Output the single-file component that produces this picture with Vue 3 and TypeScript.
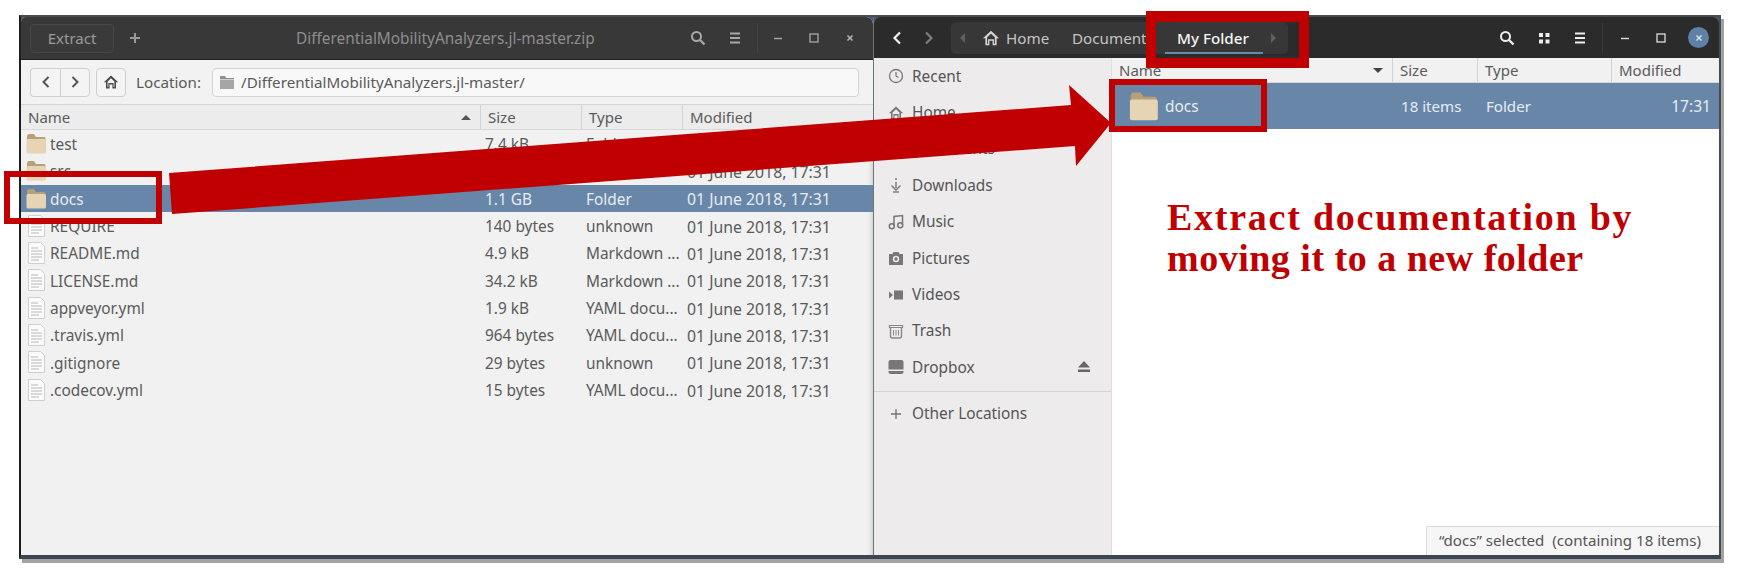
<template>
  <div class="desktop">
    <div class="frame">
      <!-- archive manager -->
      <section class="pane-left">
        <header class="title-left">
          <button class="extract-btn">Extract</button>
          <svg class="ico plus-ico" viewBox="0 0 16 16"><path d="M8 3v10M3 8h10" stroke="#9a9a9a" stroke-width="2" /></svg>
          <span class="title-text">DifferentialMobilityAnalyzers.jl-master.zip</span>
          <svg class="ico search-l" viewBox="0 0 16 16"><circle cx="6.5" cy="6.5" r="4.5" fill="none" stroke="#a8a8a8" stroke-width="2" /><path d="M10 10l4.5 4.5" stroke="#a8a8a8" stroke-width="2.4" /></svg>
          <svg class="ico menu-l" viewBox="0 0 16 16"><path d="M3 3.5h10M3 8h10M3 12.5h10" stroke="#a8a8a8" stroke-width="2" /></svg>
          <span class="divider divider-l" />
          <svg class="ico min-l" viewBox="0 0 16 16"><path d="M4 8.5h8" stroke="#a8a8a8" stroke-width="1.4" /></svg>
          <svg class="ico max-l" viewBox="0 0 16 16"><rect x="4" y="4" width="8" height="8" fill="none" stroke="#a8a8a8" stroke-width="1.3" /></svg>
          <svg class="ico close-l" viewBox="0 0 16 16"><path d="M5.5 5.5l5 5M10.5 5.5l-5 5" stroke="#b4b4b4" stroke-width="1.6" /></svg>
        </header>

        <div class="toolbar">
          <div class="btn-group">
            <span class="tool-btn nav-btn">
              <svg class="ico" viewBox="0 0 16 16"><path d="M10.5 3L5.5 8l5 5" fill="none" stroke="#555" stroke-width="2" /></svg>
            </span>
            <span class="tool-btn nav-btn">
              <svg class="ico" viewBox="0 0 16 16"><path d="M5.5 3l5 5-5 5" fill="none" stroke="#555" stroke-width="2" /></svg>
            </span>
          </div>
          <span class="tool-btn home-btn">
            <svg class="ico" viewBox="0 0 16 16"><path d="M8 1.5L.8 8.2h2.2V14.5h3.6v-4h2.800v4H13V8.2h2.200z" fill="#4a4a4a" /><path d="M4.6 7.4L8 4.2l3.4 3.2V13h-.8V9H5.4v4h-.8z" fill="#f1f1f1" /></svg>
          </span>
          <span class="loc-label">Location:</span>
          <div class="loc-entry">
            <svg class="loc-ico" viewBox="0 0 16 16"><path d="M1 2h5l1.5 2H15v1H1z" fill="#8f8f8f" /><path d="M1 5.500h14V15H1z" fill="#a6a6a6" /></svg>
            <span>/DifferentialMobilityAnalyzers.jl-master/</span>
          </div>
        </div>

        <div class="list-head cols-left">
          <span class="head-cell first">Name<i class="sort-up" /></span>
          <span class="head-cell">Size</span>
          <span class="head-cell">Type</span>
          <span class="head-cell">Modified</span>
        </div>

        <div
          v-for="row in archiveRows"
          :key="row.name"
          class="file-row cols-left"
          :class="{ selected: row.name === 'docs' }"
        >
          <span class="name-cell">
            <svg v-if="row.folder" class="folder-ico" viewBox="0 0 20 21">
              <path d="M1 3.500Q1 1 3 1h5l2 3h8q1.500 0 1.500 1.500V9H1z" fill="#b79f78" />
              <path d="M0.500 7.500Q.5 6 2 6h16.500Q20 6 20 7.500V19q0 1.500-1.500 1.500H2Q.5 20.500.5 19z" fill="#e6d4b4" />
            </svg>
            <svg v-else class="file-ico" viewBox="0 0 17 22">
              <path d="M.5.5h12l4 4v17H.5z" fill="#fbfbfb" stroke="#cfcfcf" />
              <path d="M3 6h7M3 9h11M3 12h11M3 15h11M3 18h8" stroke="#b8b8b8" stroke-width="1" />
            </svg>
            <span>{{ row.name }}</span>
          </span>
          <span class="cell">{{ row.size }}</span>
          <span class="cell">{{ row.type }}</span>
          <span class="cell date">01 June 2018, 17:31</span>
        </div>
      </section>

      <!-- nautilus -->
      <section class="pane-right">
        <header class="title-right">
          <svg class="ico back-r" viewBox="0 0 16 16"><path d="M11 2.500L5.500 8l5.500 5.500" fill="none" stroke="#f2f2f2" stroke-width="2.200" /></svg>
          <svg class="ico fwd-r" viewBox="0 0 16 16"><path d="M5 2.500L10.500 8 5 13.500" fill="none" stroke="#7c7c7c" stroke-width="2.200" /></svg>
          <nav class="path-bar">
            <i class="arrow-left" />
            <svg class="home-r" viewBox="0 0 16 16"><path d="M8 1.500L.8 8.200h2.200V14.500h3.600v-4h2.800v4H13V8.200h2.200z" fill="#d4d4d4" /><path d="M4.600 7.400L8 4.200l3.400 3.200V13h-.8V9H5.400v4h-.8z" fill="#373737" /></svg>
            <span class="crumb crumb-home">Home</span>
            <span class="crumb crumb-docs">Documents</span>
            <span class="crumb-current">My Folder</span>
            <i class="arrow-right" />
            <i class="crumb-line" />
          </nav>
          <svg class="ico search-r" viewBox="0 0 16 16"><circle cx="6.500" cy="6.500" r="4.500" fill="none" stroke="#eee" stroke-width="2" /><path d="M10 10l4.500 4.500" stroke="#eee" stroke-width="2.400" /></svg>
          <svg class="ico grid-r" viewBox="0 0 16 16"><path d="M3 3h4v4H3zM9.500 3h4v4h-4zM3 9.500h4v4H3zM9.500 9.500h4v4h-4z" fill="#eee" /></svg>
          <svg class="ico menu-r" viewBox="0 0 16 16"><path d="M3 3.500h10M3 8h10M3 12.500h10" stroke="#eee" stroke-width="2" /></svg>
          <span class="divider divider-r" />
          <svg class="ico min-r" viewBox="0 0 16 16"><path d="M4 8.500h8" stroke="#ddd" stroke-width="1.400" /></svg>
          <svg class="ico max-r" viewBox="0 0 16 16"><rect x="4" y="4" width="8" height="8" fill="none" stroke="#ddd" stroke-width="1.300" /></svg>
          <span class="close-r">
            <svg class="ico" viewBox="0 0 16 16"><path d="M5.500 5.500l5 5M10.500 5.500l-5 5" stroke="#dfe7f0" stroke-width="1.400" /></svg>
          </span>
        </header>

        <div class="right-body">
          <aside class="sidebar">
            <div v-for="place in places" :key="place.label" class="place">
              <svg class="place-ico" viewBox="0 0 16 16" v-html="place.icon" />
              <span>{{ place.label }}</span>
              <svg v-if="place.label === 'Dropbox'" class="eject" viewBox="0 0 14 12"><path d="M7 0l6 6.500H1zM1 8.500h12V11H1z" fill="#666" /></svg>
            </div>
            <div class="side-sep" />
            <div class="place other">
              <svg class="place-ico" viewBox="0 0 16 16"><path d="M8 3v10M3 8h10" stroke="#777" stroke-width="1.400" /></svg>
              <span>Other Locations</span>
            </div>
          </aside>

          <main class="files">
            <div class="list-head cols-right">
              <span class="head-cell first">Name<i class="sort-down" /></span>
              <span class="head-cell">Size</span>
              <span class="head-cell">Type</span>
              <span class="head-cell">Modified</span>
            </div>
            <div class="big-row cols-right">
              <span class="big-name">
                <svg class="folder-big" viewBox="0 0 20 21">
                  <path d="M1 3.500Q1 1 3 1h5l2 3h8q1.500 0 1.500 1.500V9H1z" fill="#b79f78" />
                  <path d="M0.500 7.500Q.5 6 2 6h16.500Q20 6 20 7.500V19q0 1.500-1.500 1.500H2Q.5 20.500.5 19z" fill="#e6d4b4" />
                </svg>
                docs
              </span>
              <span class="cell">18 items</span>
              <span class="cell">Folder</span>
              <span class="cell time">17:31</span>
            </div>
            <div class="status">“docs” selected&nbsp; (containing 18 items)</div>
          </main>
        </div>
      </section>
    </div>

    <!-- annotations drawn over the screenshot -->
    <svg class="arrow" viewBox="0 0 1738 568">
      <polygon points="169,173 1071,105 1069,85 1111,123 1076,166 1075,146 172,214" fill="#c00000" />
    </svg>
    <div class="mark mark-docs" />
    <div class="mark mark-target" />
    <div class="mark mark-crumb" />
    <p class="note">
      <span class="note-first">Extract documentation by</span>
      <span class="note-second">moving it to a new folder</span>
    </p>
  </div>
</template>

<script setup lang="ts">
interface ArchiveRow {
  name: string
  size: string
  type: string
  folder?: boolean
}

const archiveRows: ArchiveRow[] = [
  { name: 'test', size: '7.4 kB', type: 'Folder', folder: true },
  { name: 'src', size: '52.8 kB', type: 'Folder', folder: true },
  { name: 'docs', size: '1.1 GB', type: 'Folder', folder: true },
  { name: 'REQUIRE', size: '140 bytes', type: 'unknown' },
  { name: 'README.md', size: '4.9 kB', type: 'Markdown ...' },
  { name: 'LICENSE.md', size: '34.2 kB', type: 'Markdown ...' },
  { name: 'appveyor.yml', size: '1.9 kB', type: 'YAML docu...' },
  { name: '.travis.yml', size: '964 bytes', type: 'YAML docu...' },
  { name: '.gitignore', size: '29 bytes', type: 'unknown' },
  { name: '.codecov.yml', size: '15 bytes', type: 'YAML docu...' },
]

const places = [
  { label: 'Recent', icon: '<circle cx="8" cy="8" r="6.500" fill="none" stroke="#777" stroke-width="1.300"/><path d="M8 4v4l2.500 1.500" fill="none" stroke="#777" stroke-width="1.200"/>' },
  { label: 'Home', icon: '<path d="M8 1.500L.8 8.200h2.200V14.500h3.600v-4h2.800v4H13V8.200h2.200z" fill="#777"/><path d="M4.600 7.400L8 4.200l3.400 3.200V13h-.8V9H5.400v4h-.8z" fill="#edebec"/>' },
  { label: 'Documents', icon: '<path d="M3 1h10v14H3z" fill="none" stroke="#777" stroke-width="1.300"/><path d="M5 5h6M5 8h6M5 11h6" stroke="#777"/>' },
  { label: 'Downloads', icon: '<path d="M8 1v2M8 5v6" stroke="#777" stroke-width="1.400"/><path d="M3.500 8.500L8 13l4.500-4.500" fill="none" stroke="#777" stroke-width="1.400"/><path d="M5 15h6" stroke="#777" stroke-width="1.400"/>' },
  { label: 'Music', icon: '<circle cx="3.800" cy="12.200" r="2.500" fill="none" stroke="#777" stroke-width="1.500"/><circle cx="12.200" cy="11.200" r="2.500" fill="none" stroke="#777" stroke-width="1.500"/><path d="M6 12V2.500l8.500-1V11" fill="none" stroke="#777" stroke-width="1.500"/>' },
  { label: 'Pictures', icon: '<path d="M1 4h3.500l1-2h5l1 2H15v11H1z" fill="#777"/><circle cx="8" cy="9" r="3.200" fill="#edebec"/><circle cx="8" cy="9" r="1.700" fill="#777"/>' },
  { label: 'Videos', icon: '<path d="M1 4.500l4 3.500-4 3.500z" fill="#777"/><path d="M6 3.500h9v9H6z" fill="#777"/>' },
  { label: 'Trash', icon: '<path d="M1.500 2.500h13v2h-13z" fill="none" stroke="#888" stroke-width="1.200"/><path d="M2.500 5v8q0 2 2 2h7q2 0 2-2V5" fill="none" stroke="#888" stroke-width="1.400"/><path d="M5.500 7v5.500M8 7v5.500M10.500 7v5.500" stroke="#888"/>' },
  { label: 'Dropbox', icon: '<path d="M2.500 1h11q2 0 2 2v7.500H.5V3q0-2 2-2z" fill="#777"/><path d="M.5 12h15v1q0 2-2 2h-11q-2 0-2-2z" fill="#777"/>' },
]
</script>

<style>
html,
body {
  margin: 0;
  background: #fff;
  overflow: hidden;
}
</style>

<style scoped>
.desktop {
  position: relative;
  width: 1738px;
  height: 568px;
  padding: 15px 0 0 19px;
  box-sizing: border-box;
  font-family: "Noto Sans", "DejaVu Sans", sans-serif;
  font-size: 15.400px;
  color: #5a5a5a;
}
.frame {
  display: flex;
  width: 1698px;
  height: 538px;
  border-style: solid;
  border-color: #474c54 #474c54 #3c4552 #1e1e1e;
  border-width: 2px 2px 4px 2px;
  box-shadow: 3px 4px 0 #a3a3a3;
  background: #46566c;
}
.ico {
  width: 16px;
  height: 16px;
  flex-shrink: 0;
}
.divider {
  width: 1px;
  height: 30px;
  background: #444;
}

/* left window */
.pane-left {
  width: 852px;
  flex-shrink: 0;
  height: 100%;
  background: #f1f1f1;
  box-shadow: inset -6px 0 5px -5px #c8c8c8;
  border-radius: 5px 7px 0 0;
}
.title-left {
  display: flex;
  align-items: center;
  height: 43px;
  background: #383838;
  border-bottom: 1px solid #1f1f1f;
  box-sizing: border-box;
  border-radius: 5px 7px 0 0;
  padding-left: 9px;
}
.extract-btn {
  width: 84px;
  height: 29px;
  background: #3a3a3a;
  border: 1px solid #474747;
  border-radius: 4px;
  color: #9b9b9b;
  font: inherit;
  font-size: 15px;
}
.plus-ico { margin-left: 13px; }
.title-text {
  margin-left: 153px;
  width: 298px;
  white-space: nowrap;
  color: #8e8e8e;
}
.search-l { margin-left: 96px; }
.menu-l { margin-left: 21px; }
.divider-l { margin-left: 14px; }
.min-l { margin-left: 12px; }
.max-l { margin-left: 20px; }
.close-l { margin-left: 20px; }

.toolbar {
  display: flex;
  align-items: center;
  height: 45px;
  box-sizing: border-box;
  padding-left: 9px;
  background: #f2f2f2;
  border-bottom: 1px solid #d6d6d6;
}
.btn-group { display: flex; }
.tool-btn {
  display: flex;
  align-items: center;
  justify-content: center;
  height: 29px;
  box-sizing: border-box;
  background: #f4f4f4;
  border: 1px solid #cfcfcf;
  border-radius: 4px;
}
.nav-btn { width: 30px; }
.nav-btn:first-child { border-radius: 4px 0 0 4px; border-right: none; }
.nav-btn:last-child { border-radius: 0 4px 4px 0; }
.home-btn { width: 30px; margin-left: 6px; }
.loc-label { margin-left: 10px; width: 76px; font-size: 15.200px; white-space: nowrap; }
.loc-entry {
  display: flex;
  align-items: center;
  width: 647px;
  height: 29px;
  box-sizing: border-box;
  padding-left: 6px;
  gap: 6px;
  background: #f8f8f8;
  border: 1px solid #d4d4d4;
  border-radius: 4px;
  font-size: 15.200px;
}
.loc-ico { width: 16px; height: 16px; }

.list-head {
  display: grid;
  height: 25px;
  background: #ececec;
  border-bottom: 1px solid #d8d8d8;
  box-sizing: border-box;
  font-size: 15px;
}
.cols-left { grid-template-columns: 459px 101px 101px 191px; }
.cols-right { grid-template-columns: 280px 85px 134px 108px; }
.head-cell {
  display: flex;
  align-items: center;
  padding-left: 7px;
  border-left: 1px solid #d2d2d2;
  position: relative;
}
.head-cell.first { border-left: none; }
.sort-up,
.sort-down {
  position: absolute;
  right: 9px;
  top: 10px;
  width: 0;
  height: 0;
  border-left: 5px solid transparent;
  border-right: 5px solid transparent;
}
.sort-up { border-bottom: 5px solid #555; }
.sort-down { border-top: 5px solid #444; right: 9px; }

.file-row {
  display: grid;
  height: 27.330px;
  align-items: center;
}
.file-row.selected,
.big-row {
  background: #6887a8;
  color: #e6ecf3;
}
.name-cell {
  display: flex;
  align-items: center;
  gap: 4px;
  padding-left: 5px;
}
.name-cell > span,
.file-row .cell { padding-top: 2px; }
.folder-ico { width: 20px; height: 21px; }
.file-ico { width: 17px; height: 22px; margin: 0 1px 0 2px; }
.cell { padding-left: 5px; white-space: nowrap; }
.date { font-size: 15.800px; }

/* right window */
.pane-right {
  flex: 1;
  min-width: 0;
  height: 100%;
  display: flex;
  flex-direction: column;
  border-left: 1px solid #6e747c;
  box-sizing: border-box;
}
.title-right {
  display: flex;
  align-items: center;
  height: 41px;
  flex-shrink: 0;
  background: #2b2b2b;
  box-sizing: border-box;
  padding-left: 15px;
  border-radius: 7px 7px 0 0;
}
.back-r { margin-left: 0; }
.fwd-r { margin-left: 16px; }
.path-bar {
  display: flex;
  align-items: center;
  width: 337px;
  height: 32px;
  margin-left: 14px;
  background: #373737;
  border-radius: 5px;
  position: relative;
  color: #c4c4c4;
  font-size: 15.200px;
}
.arrow-left,
.arrow-right {
  width: 0;
  height: 0;
  border-top: 5px solid transparent;
  border-bottom: 5px solid transparent;
}
.arrow-left {
  margin-left: 9px;
  border-right: 5px solid #5f5f5f;
}
.home-r { width: 18px; height: 18px; margin-left: 17px; flex-shrink: 0; }
.crumb-home { margin-left: 6px; width: 66px; }
.crumb-docs { width: 71px; white-space: nowrap; }
.crumb-current {
  margin-left: 34px;
  width: 71px;
  color: #f4f4f4;
  font-weight: 500;
  white-space: nowrap;
}
.arrow-right {
  margin-left: 23px;
  border-left: 5px solid #5f5f5f;
}
.crumb-line {
  position: absolute;
  left: 214px;
  bottom: 0;
  width: 98px;
  height: 2px;
  background: #6a89a8;
}
.search-r { margin-left: 211px; }
.grid-r { margin-left: 21px; }
.menu-r { margin-left: 20px; }
.divider-r { margin-left: 14px; background: #3a3a3a; }
.min-r { margin-left: 14px; }
.max-r { margin-left: 20px; }
.close-r {
  display: flex;
  align-items: center;
  justify-content: center;
  width: 21px;
  height: 21px;
  margin-left: 19px;
  border-radius: 50%;
  background: #5e81a8;
}

.right-body {
  flex: 1;
  display: flex;
  min-height: 0;
}
.sidebar {
  width: 238px;
  flex-shrink: 0;
  background: #edebec;
  border-right: 1px solid #e0e0e0;
  box-sizing: border-box;
}
.place {
  display: flex;
  align-items: center;
  height: 36.400px;
  padding-left: 14px;
  gap: 8px;
  position: relative;
  color: #555;
}
.place-ico { width: 16px; height: 16px; flex-shrink: 0; }
.eject {
  position: absolute;
  left: 203px;
  top: 12px;
  width: 14px;
  height: 12px;
}
.side-sep {
  height: 1px;
  margin-top: 5px;
  background: #d4d4d4;
}
.other { margin-top: 4px; }

.files {
  flex: 1;
  min-width: 0;
  position: relative;
  background: #fff;
}
.files .list-head { background: #f1f1f1; }
.big-row {
  display: grid;
  height: 46px;
  align-items: center;
}
.big-name {
  display: flex;
  align-items: center;
  gap: 7px;
  padding-left: 17px;
}
.folder-big { width: 29px; height: 30px; }
.big-row .cell { padding-left: 9px; font-size: 15.100px; }
.big-row .time { text-align: right; padding-right: 8px; padding-left: 0; font-size: 15.600px; }
.status {
  position: absolute;
  right: 0;
  bottom: 0;
  width: 293px;
  height: 29px;
  box-sizing: border-box;
  padding-left: 12px;
  line-height: 27px;
  white-space: nowrap;
  background: #f6f6f6;
  border: 1px solid #dcdcdc;
  border-width: 1px 0 0 1px;
  font-size: 15.100px;
  color: #555;
}

/* red annotations */
.arrow {
  position: absolute;
  left: 0;
  top: 0;
  width: 1738px;
  height: 568px;
}
.mark {
  position: absolute;
  box-sizing: border-box;
  border: 6px solid #c00000;
}
.mark-docs { left: 4px; top: 171px; width: 158px; height: 53px; }
.mark-target { left: 1109px; top: 79px; width: 158px; height: 53px; }
.mark-crumb { left: 1146px; top: 11px; width: 163px; height: 57px; border-width: 11px 10px 10px; }
.note {
  position: absolute;
  left: 1167px;
  top: 197px;
  margin: 0;
  color: #c00000;
  font-family: "Liberation Serif", serif;
  font-size: 38px;
  font-weight: 700;
  line-height: 41px;
  white-space: nowrap;
}
.note span { display: block; }
.note-first { letter-spacing: 1.750px; }
.note-second { letter-spacing: .5px; }
</style>
